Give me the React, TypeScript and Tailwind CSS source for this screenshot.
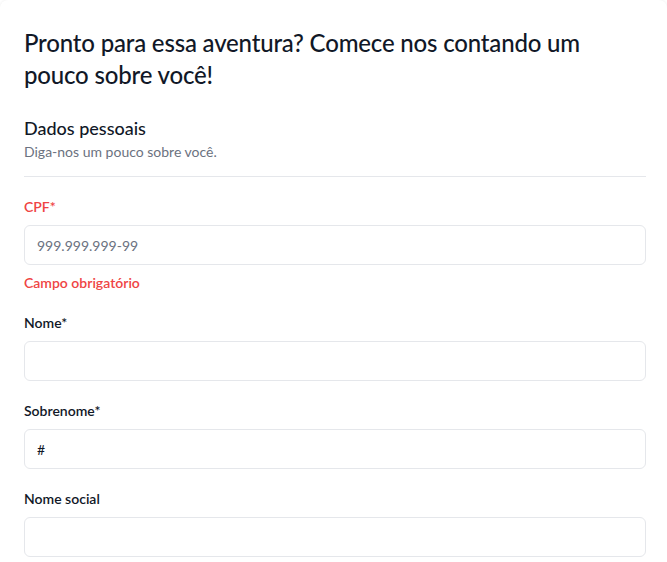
const fields = [
  { label: "Nome*", value: "" },
  { label: "Sobrenome*", value: "#" },
  { label: "Nome social", value: "" },
];

export default function App() {
  return (
    <div className="min-h-screen bg-white font-['Lato',sans-serif] text-[#111827]">
      <div className="rounded-lg bg-white pl-6 pr-[21px] pt-[27px] pb-6 shadow-[0_0_3px_rgba(0,0,0,0.08)]">
        <h1 className="text-2xl font-medium leading-8 tracking-[-0.18px]">
          Pronto para essa aventura? Comece nos contando um pouco sobre você!
        </h1>

        <div className="mt-[23px] border-b border-[#e5e7eb] pb-[14px]">
          <h2 className="text-lg font-medium leading-7">Dados pessoais</h2>
          <p className="text-sm leading-5 text-[#6b7280]">Diga-nos um pouco sobre você.</p>
        </div>

        <div className="mt-5 flex flex-col">
          <label className="mb-2 text-sm font-semibold leading-5 text-[#ef4444]">CPF*</label>
          <input
            className="h-10 w-full rounded-md border border-[#e5e7eb] px-3 text-sm outline-none placeholder:text-[#6b7280]"
            placeholder="999.999.999-99"
          />
          <span className="mt-2 text-sm font-semibold leading-5 text-[#ef4444]">Campo obrigatório</span>
        </div>

        {fields.map((f) => (
          <div key={f.label} className="mt-5 flex flex-col">
            <label className="mb-2 text-sm font-semibold leading-5">{f.label}</label>
            <input
              className="h-10 w-full rounded-md border border-[#e5e7eb] px-3 text-sm outline-none"
              defaultValue={f.value}
            />
          </div>
        ))}
      </div>
    </div>
  );
}
